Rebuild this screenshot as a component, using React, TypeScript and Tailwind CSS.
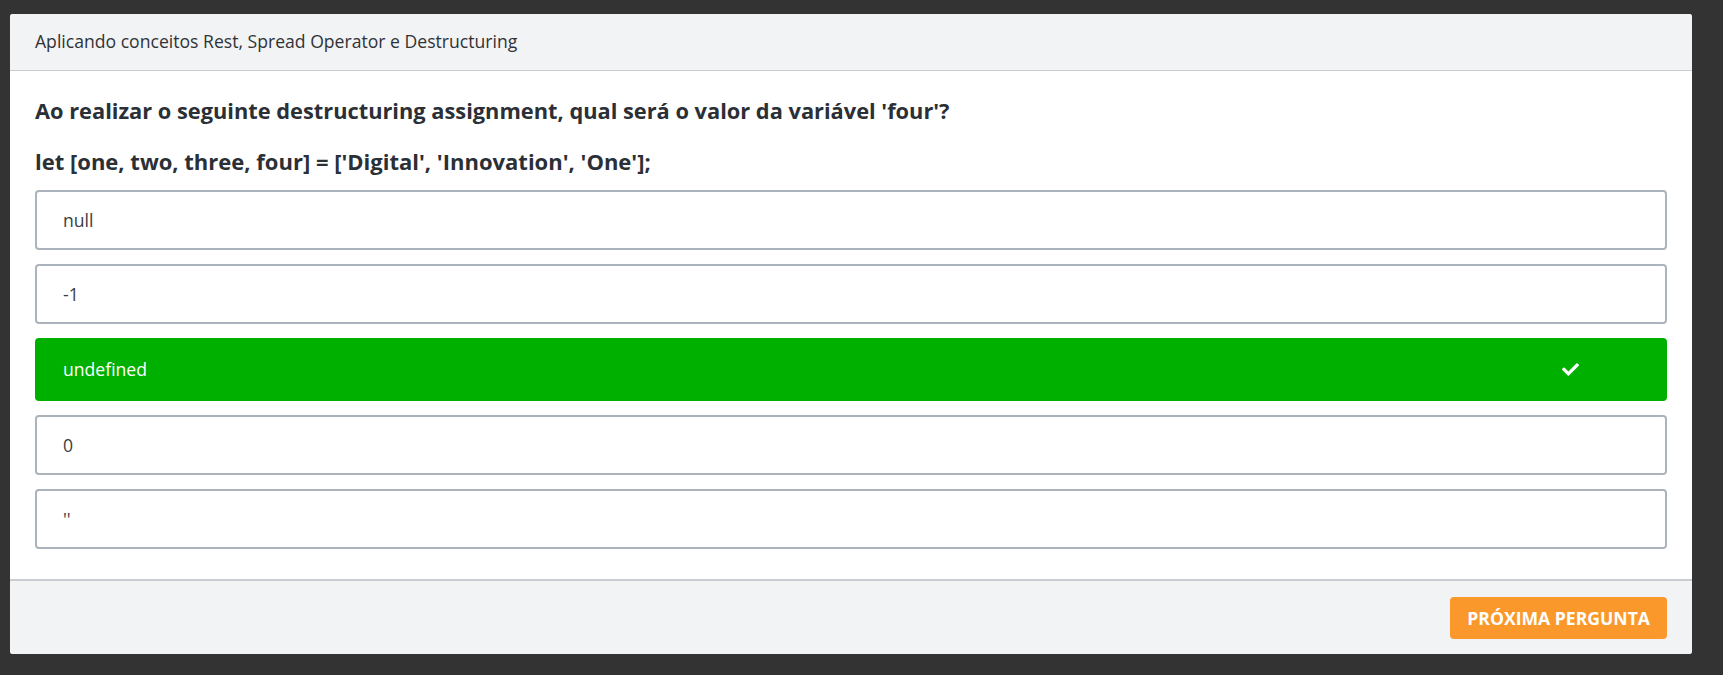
import React from "react";
import { FaCheck } from "react-icons/fa";

type Option = {
  label: string;
  correct?: boolean;
};

const options: Option[] = [
  { label: "null" },
  { label: "-1" },
  { label: "undefined", correct: true },
  { label: "0" },
  { label: "''" },
];

function OptionRow({ label, correct }: Option) {
  if (correct) {
    return (
      <div className="flex h-[63px] items-center justify-between rounded-[4px] bg-[#00b000] pl-[28px] pr-[88px] text-[17.6px] text-white">
        <span>{label}</span>
        <FaCheck className="h-[17px] w-[17px]" />
      </div>
    );
  }
  return (
    <div className="flex h-[60px] items-center rounded-[4px] border-2 border-[#abb3bc] bg-white pl-[26px] text-[17.6px] text-[#3a3d42]">
      <span>{label}</span>
    </div>
  );
}

export default function App() {
  return (
    <div
      className="h-[675px] w-full bg-[#333333] pt-[14px]"
      style={{ fontFamily: '"Open Sans", "Noto Sans", sans-serif' }}
    >
      <div className="ml-[10px] w-[1682px] overflow-hidden rounded-[3px] bg-white">
        <div className="flex h-[57px] items-center border-b border-[#c9ccd1] bg-[#f2f3f5] px-[25px] pb-[2px] text-[17.6px] text-[#2f3237]">
          Aplicando conceitos Rest, Spread Operator e Destructuring
        </div>

        <div className="px-[25px] pt-[26px] pb-[30px]">
          <h2 className="text-[21.8px] leading-[28px] font-bold text-[#2b2f36]">
            Ao realizar o seguinte destructuring assignment, qual será o valor da variável 'four'?
          </h2>
          <p className="mt-[22px] text-[22px] leading-[28px] font-bold text-[#2b2f36]">
            let [one, two, three, four] = ['Digital', 'Innovation', 'One'];
          </p>

          <div className="mt-[15px] flex flex-col gap-[14px]">
            {options.map((o) => (
              <OptionRow key={o.label} {...o} />
            ))}
          </div>
        </div>

        <div className="flex h-[75px] items-start justify-end border-t-2 border-[#c9ccd1] bg-[#f2f3f5] px-[25px] pt-[16px]">
          <button className="h-[42px] rounded-[4px] bg-[#fb982c] px-[17px] text-[17.6px] font-bold text-white">
            PRÓXIMA PERGUNTA
          </button>
        </div>
      </div>
    </div>
  );
}
